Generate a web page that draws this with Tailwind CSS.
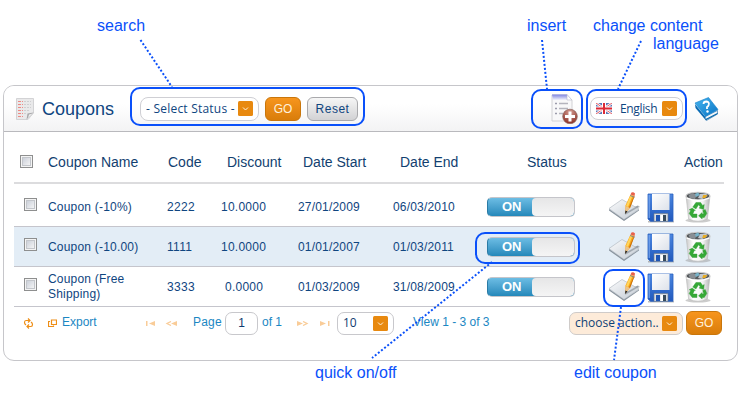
<!DOCTYPE html>
<html lang="en">
<head>
<meta charset="utf-8">
<title>Coupons</title>
<script src="https://cdn.jsdelivr.net/npm/@tailwindcss/browser@4"></script>
</head>
<body class="relative h-[400px] w-[739px] overflow-hidden bg-white font-['Liberation_Sans',Arial,sans-serif] text-[#0f4580]">
<svg class="absolute h-0 w-0" aria-hidden="true">
  <defs>
    <linearGradient id="paper" x1="0" y1="0" x2="1" y2="1"><stop offset="0" stop-color="#fbfcfd"/><stop offset="1" stop-color="#c3cad3"/></linearGradient>
    <linearGradient id="box" x1="0" y1="0" x2="1" y2="1"><stop offset="0" stop-color="#c9ced8"/><stop offset="1" stop-color="#f6f6f6"/></linearGradient>
    <linearGradient id="blue" x1="0" y1="0" x2="0" y2="1"><stop offset="0" stop-color="#4b86e0"/><stop offset="1" stop-color="#2159bd"/></linearGradient>
    <linearGradient id="bin" x1="0" y1="0" x2="1" y2="0"><stop offset="0" stop-color="#c9c9c9"/><stop offset=".3" stop-color="#fff"/><stop offset=".7" stop-color="#f4f4f4"/><stop offset="1" stop-color="#b5b5b5"/></linearGradient>
    <linearGradient id="label" x1="0" y1="0" x2="1" y2="1"><stop offset="0" stop-color="#fff"/><stop offset="1" stop-color="#dde2ea"/></linearGradient>
    <linearGradient id="cover" x1="0" y1="0" x2="1" y2="1"><stop offset="0" stop-color="#45b5f0"/><stop offset="1" stop-color="#0a74c4"/></linearGradient>
    <radialGradient id="red" cx=".5" cy=".2" r=".8"><stop offset="0" stop-color="#d39a90"/><stop offset="1" stop-color="#8a2f25"/></radialGradient>
    <linearGradient id="sheet" x1="0" y1="0" x2="0" y2="1"><stop offset="0" stop-color="#7d83e0"/><stop offset="1" stop-color="#f4f4fb"/></linearGradient>
  </defs>
  <symbol id="edit" viewBox="0 0 32 32">
    <path d="M17 19 29 14.500 31 16 22 19Z" fill="#8f959b" opacity=".7"/>
    <path d="M0 17.500 13 8.500 30 18 15 28.500Z" fill="url(#paper)" stroke="#b4bbc3" stroke-width=".7"/>
    <path d="M0 18 15 28.500 30 18.500V19.500L15 30 0 19.500Z" fill="#8a949e"/>
    <path d="M16 23 29 15.500" stroke="#8d959d" stroke-width="1.500" opacity=".7"/>
    <path d="M16 22.500 16.500 14.500 21.500 3.500 25.500 5 21 17Z" fill="#f9a51a"/>
    <path d="M21.500 4 23.500 5 19 16 17 15Z" fill="#ffd559"/>
    <path d="M25 5 25.500 5.500 21 17 20 16.500Z" fill="#c66e0b"/>
    <path d="M16 22.500 16.500 15 21 17Z" fill="#ecc38b"/>
    <path d="M16 23 16.400 19.500 18.500 20.500Z" fill="#222"/>
    <path d="M21.500 3.500 22.500 1.500Q24.500 .500 26 2.500L25.500 5Z" fill="#e8604a"/>
    <path d="M21 4.500 25.500 6.300" stroke="#85858b" stroke-width="1"/>
  </symbol>
  <symbol id="save" viewBox="0 0 28 30">
    <path d="M1 28.700H27" stroke="#777" stroke-width="1.500" opacity=".5"/>
    <path d="M1 1H26V28.300H3.500L1 26Z" fill="url(#blue)" stroke="#2a61bd" stroke-width=".8"/>
    <path d="M5 1H22.500V17H5Z" fill="url(#label)"/>
    <path d="M7 20.500H21V28.300H7Z" fill="#d8dce2" stroke="#6a7788" stroke-width=".6"/>
    <path d="M9 22H13V28H9Z" fill="#1e55b5"/>
    <path d="M16 22H19V28H16Z" fill="#394b5a"/>
    <path d="M13.500 22H16V28H13.500Z" fill="#fff"/>
    <path d="M2.200 2V25" stroke="#7baaf0"/>
  </symbol>
  <symbol id="trash" viewBox="0 0 28 32">
    <ellipse cx="14" cy="29.500" rx="12" ry="2" fill="#999" opacity=".5"/>
    <path d="M2.500 5 5 28Q14 32.500 23 28L25.500 5Z" fill="url(#bin)" stroke="#b8b8b8" stroke-width=".6"/>
    <ellipse cx="14" cy="5" rx="11.500" ry="3.800" fill="#55595c" stroke="#cdcdcd"/>
    <path d="M5 4 9 2 13 4 11 8 6 7Z" fill="#898f94"/>
    <path d="M11 3 14 1.500 16 4 12 6Z" fill="#77b3c9"/>
    <path d="M16 3 22 2.500 23 5 18 8 14 7Z" fill="#c3c9ce"/>
    <path d="M19 4 23 4 21 7 18 7Z" fill="#e7ab24"/>
    <path d="M3 7Q14 12 25 7" stroke="#fff" stroke-width="1.200" fill="none"/>
    <g fill="#35a936" stroke="#2f9a33" stroke-width=".4">
      <path d="M9 16 12 11.500H16.500L18.500 14.500 20 13.500 19.500 18.500 15 17 16.300 16 14.500 13.800 12 18Z"/>
      <path d="M8.500 17 11.500 19.500 10.500 19.500 9 23H13V26.500H8.500L5.500 22.500 7 19.500 5.500 18.800Z"/>
      <path d="M18.500 19.500 21 18.500 22.500 22.500 20 26.500H18V28L14.500 24.800 18 21.500V23L19.500 22.800Z"/>
    </g>
  </symbol>
  <symbol id="chev" viewBox="0 0 15 15">
    <rect width="15" height="15" rx="1.500" fill="#e8890f"/>
    <path d="M5 6.500 7.500 9 10 6.500" fill="none" stroke="#fff3df" stroke-width="1"/>
  </symbol>
  <symbol id="check" viewBox="0 0 13 13">
    <rect x=".5" y=".5" width="12" height="12" fill="#f4f4f4" stroke="#8e8f8f"/>
    <rect x="2.500" y="2.500" width="8" height="8" fill="url(#box)" stroke="#c3c6cb"/>
  </symbol>
</svg>

<main class="ml-[3px] mt-[85px] h-[276px] w-[735px] rounded-[11px] border border-[#c6c6ca] bg-white">
  <header class="flex h-[46px] items-center rounded-t-[10px] border-b border-[#b9b9bd] bg-linear-to-b from-white from-40% to-[#f3f3f4]">
    <svg class="ml-3 h-[22px] w-[18px]" viewBox="0 0 18 22">
      <path d="M.5.500H17.500V15L12 21.500H.5Z" fill="#e9e9ea" stroke="#d3d3d5"/>
      <path d="M2 3.500H7M2 6.500H7M2 9.500H7M2 12.500H7M2 15.500H7M2 18.500H7" stroke="#ee8a84" stroke-dasharray="3 1"/>
      <path d="M8 3.500H15M8 6.500H15M8 9.500H15M8 12.500H14M8 15.500H11" stroke="#cfcfd1" stroke-dasharray="2 1"/>
      <path d="M10.500 21.500 11.500 15.500 17.500 14.500Z" fill="#a9a9ab"/><path d="M12 20 13 16.500 16.500 15.500Z" fill="#eee"/>
    </svg>
    <h1 class="ml-2 w-[98px] text-[18px] leading-6">Coupons</h1>
    <div class="flex h-6 w-[119px] items-center justify-between rounded-lg border border-[#cfcfd4] bg-white pl-[5px] pr-[5px] font-['Open_Sans',sans-serif] text-[12px]"><span class="whitespace-nowrap tracking-[0.22px]">- Select Status -</span><svg class="h-[15px] w-[15px]"><use href="#chev"/></svg></div>
    <button class="ml-1.5 h-6 w-9 rounded-[6px] border border-[#c9760b] bg-linear-to-b from-[#f7951d] to-[#d97d0a] text-[12px] leading-5 text-[#fff1dc]">GO</button>
    <button class="ml-1.5 h-6 w-[51px] rounded-[6px] border border-[#a9a9ac] bg-linear-to-b from-[#f6f6f6] to-[#d2d2d4] text-[12px] leading-5 tracking-[0.5px]">Reset</button>
    <svg class="ml-[193px] h-[31px] w-[28px]" viewBox="0 0 28 31">
      <path d="M1 2H16L21 7V28H1Z" fill="#f8f8f9" stroke="#d2d2d5"/>
      <path d="M1 1.500H16L21 7H2Z" fill="url(#sheet)"/><path d="M16 1.500V7H21Z" fill="#fff" stroke="#b8b8ca" stroke-width=".6"/>
      <path d="M4 10.500H6M4 15.500H6M4 20.500H6" stroke="#9b9bab" stroke-width="1.500"/><path d="M8 10.500H17M8 15.500H17M8 20.500H12" stroke="#b4b4bd" stroke-width="1.500"/>
      <circle cx="19" cy="23.500" r="7.300" fill="url(#red)" stroke="#8c655f" stroke-width=".7"/>
      <path d="M19 18.500V28.500M14 23.500H24" stroke="#fff" stroke-width="3"/>
    </svg>
    <div class="ml-[11px] flex h-[23px] w-[93px] items-center rounded-lg border border-[#cfcfd4] bg-white px-[5px] font-['Open_Sans',sans-serif] text-[12px]">
      <svg class="h-[11px] w-4" viewBox="0 0 16 11"><rect width="16" height="11" fill="#5a78b8"/><path d="M0 0 16 11M16 0 0 11" stroke="#fff" stroke-width="2.500"/><path d="M0 0 16 11M16 0 0 11" stroke="#e35d66" stroke-width="1"/><path d="M8 0V11M0 5.500H16" stroke="#fff" stroke-width="4"/><path d="M8 0V11M0 5.500H16" stroke="#dc2936" stroke-width="2"/></svg>
      <span class="ml-2 w-[42px] tracking-[-0.35px]">English</span><svg class="h-[15px] w-[15px]"><use href="#chev"/></svg>
    </div>
    <svg class="ml-[11px] h-6 w-[26px]" viewBox="0 0 26 24">
      <path d="M1 7 11 19.500 12 23.500 1.500 11Z" fill="#0b6cb5"/>
      <path d="M11 19.500 23.500 13.500V17L12.500 23.500Z" fill="#f1f5f8" stroke="#1c6aa7" stroke-width=".6"/>
      <path d="M1 6 14.500 .500 24 12.500 11.500 19.500Z" fill="url(#cover)" stroke="#1580c9" stroke-width=".6"/>
      <path d="M11.500 22.800 23.500 16.500" stroke="#0666a9" stroke-width="1.200"/>
      <path d="M9.500 7Q9.500 4.500 12.500 4.500 15.500 5 14.700 7.800 14 9.500 13 10V12" fill="none" stroke="#fff" stroke-width="1.800"/><circle cx="13.500" cy="14.500" r="1.200" fill="#fff"/>
    </svg>
  </header>

  <section class="ml-2.5 w-[716px]">
    <div class="grid h-[52px] w-[710px] grid-cols-[34px_120px_59px_76px_97px_127px_157px_40px] items-center border-b-2 border-[#dcdcde] pt-[11px] text-[14px] text-[#123f70] [&>span]:whitespace-nowrap">
      <svg class="-mt-0.5 ml-1.5 h-[13px] w-[13px]"><use href="#check"/></svg>
      <span>Coupon Name</span><span>Code</span><span>Discount</span><span>Date Start</span><span>Date End</span><span>Status</span><span>Action</span>
    </div>
    <div id="rows" class="text-[12px]"></div>
    <footer class="flex h-8 items-center text-[12px] text-[#1b87c3]">
      <svg class="ml-[9px] h-[11px] w-[11px]" viewBox="0 0 11 11"><path d="M6.500 2.500H3Q1.500 2.500 1.500 4.500 1.500 6 3 7M5 .500 7 2.500 5 4.500M4.500 8.500H8Q9.500 8.500 9.500 6.500 9.500 5 8 4M6 6.500 4 8.500 6 10.500" fill="none" stroke="#ee8e16" stroke-width="1.200"/></svg>
      <svg class="ml-3.5 h-2 w-[9px]" viewBox="0 0 9 8"><path d="M3.500 1H8.500V5.500H3.500ZM2 2.500H.5V7.500H5.500V6.500M3 1H9" fill="none" stroke="#ee8e16" stroke-width="1.200"/></svg>
      <span class="-mt-0.5 ml-[5px] w-[84px]">Export</span>
      <svg class="h-[5px] w-[31px]" viewBox="0 0 31 5"><path d="M0 0H1.500V5H0ZM9 0V5L3 2.500ZM31 0V5L25 2.500Z" fill="#f9cc98"/><path d="M25 .500 21 2.500 25 4.500" fill="none" stroke="#f9cc98" stroke-width="1.300"/></svg>
      <span class="-mt-0.5 ml-4 w-8 tracking-[0.2px]">Page</span>
      <span class="flex h-[23px] w-[33px] items-center justify-center rounded-[7px] border border-[#c8c8cc] text-[#0f3b6f]">1</span>
      <span class="-mt-0.5 ml-1 w-[35px]">of 1</span>
      <svg class="h-[5px] w-[33px]" viewBox="0 0 33 5"><path d="M0 0V5L6 2.500ZM23 0V5L29 2.500ZM31 0H32.500V5H31Z" fill="#f9cc98"/><path d="M6 .500 10 2.500 6 4.500" fill="none" stroke="#f9cc98" stroke-width="1.300"/></svg>
      <span class="ml-[7px] flex h-[23px] w-[57px] items-center justify-between rounded-[7px] border border-[#c8c8cc] pl-[5px] pr-[5px] font-['Open_Sans',sans-serif] text-[#0f3b6f]">10<svg class="h-[15px] w-[15px]"><use href="#chev"/></svg></span>
      <span class="-mt-0.5 ml-[19px] w-[156px]">View 1 - 3 of 3</span>
      <span class="flex h-[23px] w-[114px] items-center justify-between rounded-[7px] border border-[#cfcbc9] bg-[#fdebd9] pl-[5px] pr-[5px] font-['Open_Sans',sans-serif] text-[#0f4275]"><span class="whitespace-nowrap">choose action..</span><svg class="h-[15px] w-[15px]"><use href="#chev"/></svg></span>
      <button class="ml-[3px] h-6 w-9 rounded-[6px] border border-[#c9760b] bg-linear-to-b from-[#f7951d] to-[#d97d0a] text-[12px] leading-5 text-[#fff1dc]">GO</button>
    </footer>
  </section>
</main>

<svg class="pointer-events-none absolute left-0 top-0 h-[400px] w-[739px]" viewBox="0 0 739 400" fill="none" stroke="#0a50fa" stroke-width="2">
  <rect x="131" y="88" width="233" height="37" rx="9"/>
  <rect x="532" y="90" width="50" height="38" rx="9"/>
  <rect x="587" y="90" width="99" height="37" rx="9"/>
  <rect x="476" y="233" width="103" height="30" rx="9"/>
  <rect x="604" y="270" width="40" height="36" rx="9"/>
  <path d="M140.500 40 172 87M542 40 547 89M641 41 618 89M492 262 372 358M621 307 614 360" stroke-dasharray="2 2"/>
</svg>
<div class="text-[16px] leading-[18px] text-[#0a50fa]">
  <span class="absolute left-[97px] top-[17px]">search</span>
  <span class="absolute left-[527px] top-[17px]">insert</span>
  <span class="absolute left-[593px] top-[17px] whitespace-nowrap">change content</span>
  <span class="absolute left-[653px] top-[35px]">language</span>
  <span class="absolute left-[315px] top-[364px] whitespace-nowrap">quick on/off</span>
  <span class="absolute left-[574px] top-[364px] whitespace-nowrap">edit coupon</span>
</div>
<script>
const rows = [
  ['Coupon (-10%)', '2222', '10.0000', '27/01/2009', '06/03/2010'],
  ['Coupon (-10.00)', '1111', '10.0000', '01/01/2007', '01/03/2011'],
  ['Coupon (Free Shipping)', '3333', '0.0000', '01/03/2009', '31/08/2009']
];
document.getElementById('rows').innerHTML = rows.map((r, i) => `
  <div class="grid ${i === 0 ? 'h-[43px] pt-1' : 'h-10 pt-px'} grid-cols-[34px_119px_54px_77px_95px_94px_122px_38px_38px_38px] items-center border-b border-[#c5c5cc] ${i === 1 ? 'bg-[#e3edf6]' : ''}">
    <svg class="-mt-[5px] ml-2.5 h-[13px] w-[13px]"><use href="#check"/></svg>
    <span class="w-[95px] leading-[15px] tracking-[0.2px]">${r[0]}</span><span class="tracking-[0.3px]">${r[1]}</span>
    <span class="tracking-[0.25px] ${i === 2 ? 'pl-1' : ''}">${r[2]}</span><span class="tracking-[0.18px]">${r[3]}</span><span class="tracking-[0.18px]">${r[4]}</span>
    <span class="flex h-5 w-[88px] overflow-hidden rounded-[5px] border border-[#c5c5ca] border-l-[#2a7ba5] bg-linear-to-b from-[#6cbde4] to-[#2288ba]">
      <b class="w-[44px] pl-3.5 text-[13px] leading-[18px] text-white">ON</b><i class="h-full flex-1 rounded-[4px] bg-linear-to-b from-[#e6e6e7] to-[#f5f5f5]"></i>
    </span>
    <svg class="h-8 w-8"><use href="#edit"/></svg><svg class="mt-0.5 h-[30px] w-[28px]"><use href="#save"/></svg><svg class="h-8 w-[26px]" viewBox="1.500 0 25 32" preserveAspectRatio="none"><use href="#trash" width="28" height="32"/></svg>
  </div>`).join('');
</script>
</body>
</html>
